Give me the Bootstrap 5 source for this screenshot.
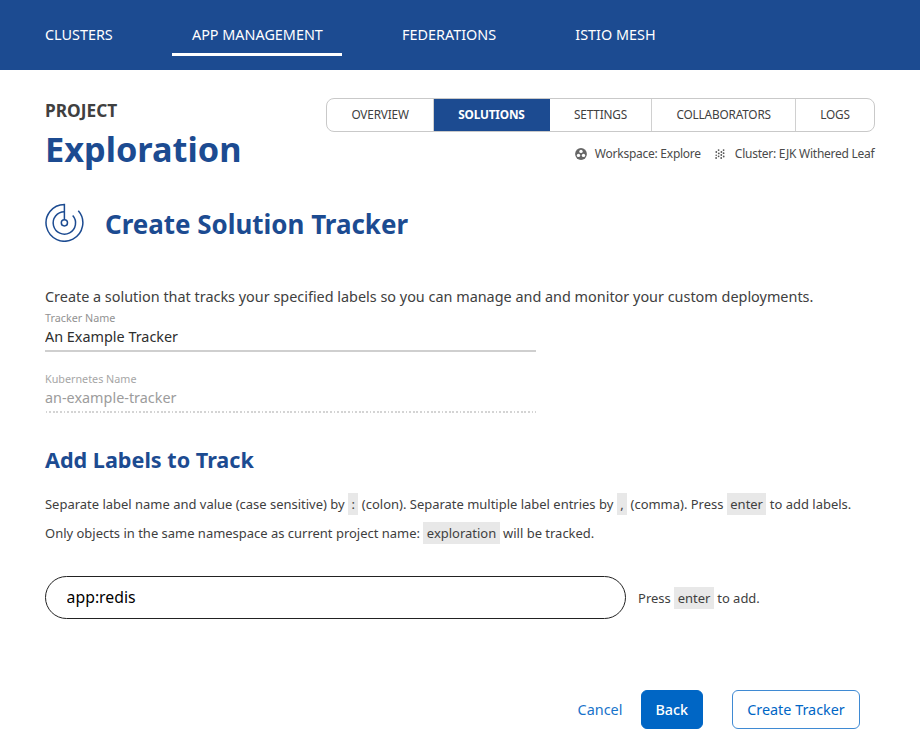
<!DOCTYPE html>
<html lang="en">
<head>
<meta charset="utf-8">
<meta name="viewport" content="width=device-width, initial-scale=1">
<title>Create Solution Tracker</title>
<link href="https://cdn.jsdelivr.net/npm/bootstrap@5.3.0/dist/css/bootstrap.min.css" rel="stylesheet">
<style>
  :root { --brand: #1c4b91; --action: #0066c5; }
  body { font-family: "Noto Sans", sans-serif; font-size: 14.41px; color: #404040; background: #fff; overflow: hidden; }
  .topbar { height: 69.6px; background: var(--brand); padding: 12px 0 0 25.4px; }
  .topbar .nav { gap: 40px; }
  .topbar .nav-link { color: #fff; font-size: 14.4px; line-height: 20px; height: 44px; padding: 13px 19.6px 0; border-bottom: 3px solid transparent; }
  .topbar .nav-link.active { border-bottom-color: #fff; }
  .page { padding: 29px 45px 0; }
  .kicker { font-size: 17.3px; line-height: 24px; font-weight: 700; }
  .project-name { font-size: 34.3px; line-height: 48px; font-weight: 700; color: var(--brand); margin-top: 2.5px; }
  .tabs { border: 1px solid #c9c9c9; border-radius: 8px; height: 34px; margin-top: -1px; overflow: hidden; }
  .tabs .nav-link { color: #404040; font-size: 11.8px; letter-spacing: -.17px; line-height: 31px; padding: 0 24.2px; border-right: 1px solid #d0d0d0; }
  .tabs .nav-link:last-child { border-right: 0; }
  .tabs .nav-link.active { background: var(--brand); color: #fff; font-weight: 700; border-color: var(--brand); }
  .meta { font-size: 12px; letter-spacing: -.25px; line-height: 16px; color: #4a4a4a; margin: 14.5px .5px 0 0; }
  .cluster-icon { margin: 0 8px 0 14px; }
  .heading { height: 40px; margin-top: 29.5px; }
  .heading h1 { font-size: 25.95px; line-height: 40px; font-weight: 700; color: var(--brand); margin-left: 21px; padding-top: 2px; }
  .intro { line-height: 20px; margin-top: 44px; }
  .field { width: 491px; }
  .field label { display: block; font-size: 10.77px; line-height: 14px; color: #929292; }
  .field input { display: block; width: 100%; border: 0; padding: 0; margin-top: 2px; font-size: 14.4px; line-height: 20px; height: 20px; color: #2e2e2e; background: none; outline: 0; }
  .field-name { height: 45px; padding-top: 4px; border-bottom: 2px solid #cfcfcf; }
  .field-k8s { height: 41px; margin-top: 20px; }
  .field-k8s label { color: #a6a6a6; }
  .field-k8s input { color: #9c9c9c; }
  .rule { display: block; margin-top: 3px; }
  .sub { font-size: 21.6px; line-height: 30px; font-weight: 700; color: var(--brand); margin-top: 32px; }
  .hint { font-size: 12.97px; line-height: 29px; }
  .labels-help { margin-top: 15px; }
  .key { background: #e8e8e8; padding: 2px 3.5px; }
  .entry { gap: 12.5px; margin-top: 28px; }
  .entry .hint { padding-top: 2px; }
  .label-input { width: 580.6px; height: 43px; border: 1px solid #222; border-radius: 22px; padding: 0 21px 1px 20.6px; font-size: 15.8px; color: #000; background: #fff; outline: 0; }
  .actions { height: 39px; margin-top: 71.5px; padding-right: 15px; }
  .actions .btn { font-size: 14.4px; line-height: 20px; padding: 9px 14.2px 8px; border-radius: 6px; border-width: 1px; }
  .actions .btn-fill { background: var(--action); border-color: var(--action); color: #fff; font-weight: 500; padding-left: 13.8px; padding-right: 13.8px; margin: 0 29px 0 3px; }
  .actions .btn-line { border-color: #3f8ad3; color: var(--action); }
  .actions .btn-text { color: #1873ca; }
</style>
<script src="https://cdn.jsdelivr.net/npm/bootstrap@5.3.0/dist/js/bootstrap.bundle.min.js"></script>
</head>
<body>
<header class="topbar">
  <nav class="nav flex-nowrap">
    <a class="nav-link" href="#">CLUSTERS</a>
    <a class="nav-link active" href="#">APP MANAGEMENT</a>
    <a class="nav-link" href="#">FEDERATIONS</a>
    <a class="nav-link" href="#">ISTIO MESH</a>
  </nav>
</header>
<main class="page">
  <div class="d-flex justify-content-between align-items-start">
    <div>
      <div class="kicker">PROJECT</div>
      <div class="project-name">Exploration</div>
    </div>
    <div class="d-flex flex-column align-items-end">
      <nav class="tabs nav flex-nowrap">
        <a class="nav-link" href="#">OVERVIEW</a>
        <a class="nav-link active" href="#">SOLUTIONS</a>
        <a class="nav-link" href="#">SETTINGS</a>
        <a class="nav-link" href="#">COLLABORATORS</a>
        <a class="nav-link" href="#">LOGS</a>
      </nav>
      <div class="meta d-flex align-items-center">
        <svg width="12" height="12" viewBox="0 0 12 12" class="me-2"><circle cx="6" cy="6" r="5.9" fill="#666"/><circle cx="6" cy="3.4" r="1.7" fill="#fff"/><circle cx="3.5" cy="7.4" r="1.7" fill="#fff"/><circle cx="8.5" cy="7.4" r="1.7" fill="#fff"/></svg>
        <span>Workspace: Explore</span>
        <svg width="12" height="10" viewBox="0 0 12 10" class="cluster-icon" fill="#555"><circle cx="3.6" cy="1.1" r=".9"/><circle cx="8.6" cy="1.1" r=".9"/><circle cx="6.4" cy="3" r=".9"/><circle cx="1.3" cy="3" r=".9"/><circle cx="3.8" cy="4.4" r=".9"/><circle cx="8.6" cy="4.2" r=".9"/><circle cx="1.2" cy="6.2" r=".8"/><circle cx="6.3" cy="6" r=".9"/><circle cx="3.6" cy="7.3" r=".9"/><circle cx="8.7" cy="7.5" r=".9"/><circle cx="1.1" cy="9" r=".9"/><circle cx="6.2" cy="9" r=".9"/></svg>
        <span>Cluster: EJK Withered Leaf</span>
      </div>
    </div>
  </div>

  <div class="heading d-flex align-items-center">
    <svg width="39" height="39" viewBox="0 -.5 39 39" fill="none" stroke="#1c4b91" stroke-width="1.5"><path d="M19.4 16.2V.9A18.4 18.4 0 1 0 33.3 7.2"/><path d="M19.4 8.2A11.2 11.2 0 1 0 27.7 11.9"/><circle cx="19.4" cy="19.3" r="3.1"/></svg>
    <h1 class="mb-0">Create Solution Tracker</h1>
  </div>

  <p class="intro mb-0">Create a solution that tracks your specified labels so you can manage and and monitor your custom deployments.</p>
  <div class="field field-name">
    <label for="name">Tracker Name</label>
    <input id="name" value="An Example Tracker">
  </div>
  <div class="field field-k8s">
    <label for="k8s">Kubernetes Name</label>
    <input id="k8s" value="an-example-tracker" disabled>
    <svg class="rule" width="491" height="2"><path d="M1 1H491" stroke="#c6c6c6" stroke-width="1.6" stroke-dasharray="1 2 2 2 2 1 2 2 2 2"/></svg>
  </div>

  <h2 class="sub mb-0">Add Labels to Track</h2>
  <div class="hint labels-help text-nowrap">Separate label name and value (case sensitive) by <span class="key">:</span> (colon). Separate multiple label entries by <span class="key">,</span> (comma). Press <span class="key">enter</span> to add labels.<br>Only objects in the same namespace as current project name: <span class="key">exploration</span> will be tracked.</div>

  <div class="entry d-flex align-items-center">
    <input class="label-input" value="app:redis" aria-label="Label">
    <span class="hint">Press <span class="key">enter</span> to add.</span>
  </div>

  <div class="actions d-flex justify-content-end align-items-center">
    <button class="btn btn-text">Cancel</button>
    <button class="btn btn-fill">Back</button>
    <button class="btn btn-line">Create Tracker</button>
  </div>
</main>
</body>
</html>
